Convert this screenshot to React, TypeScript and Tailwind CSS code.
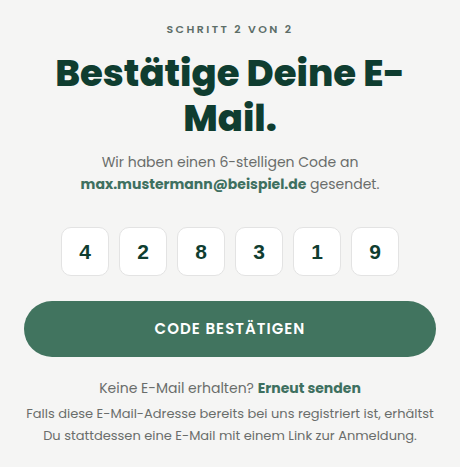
export default function App() {
  const digits = ["4", "2", "8", "3", "1", "9"];
  return (
    <div
      className="min-h-[467px] w-full bg-[#f5f5f4] px-6 pt-[21px] text-center"
      style={{ fontFamily: "Poppins, 'Open Sans', 'Noto Sans', sans-serif" }}
    >
      <p className="text-[11px] font-semibold leading-4 tracking-[0.22em] text-[#5d6e68]">
        SCHRITT 2 VON 2
      </p>
      <h1 className="mx-auto mt-[14px] max-w-[400px] text-[37px] font-extrabold leading-[45px] text-[#0f3d30]">
        Bestätige Deine E-Mail.
      </h1>
      <p className="mt-[10px] text-[14px] leading-[22px] text-[#6a6d6b]">
        Wir haben einen 6-stelligen Code an
        <br />
        <span className="font-bold text-[#3e7060]">max.mustermann@beispiel.de</span> gesendet.
      </p>
      <div className="mt-[32px] flex justify-center gap-[10px]">
        {digits.map((d, i) => (
          <div
            key={i}
            className="flex h-[49px] w-[48px] items-center justify-center rounded-[10px] border border-[#e3e3e3] bg-white text-[21px] font-bold text-[#0f3d30]"
            style={{ fontFamily: "'Liberation Sans', Arial, sans-serif" }}
          >
            {d}
          </div>
        ))}
      </div>
      <button className="mt-[25px] flex h-[56px] w-full items-center justify-center rounded-full bg-[#41745f] text-[15px] font-semibold tracking-[0.07em] text-white">
        CODE BESTÄTIGEN
      </button>
      <p className="mt-[20px] text-[14px] leading-[22px] text-[#6a6d6b]">
        Keine E-Mail erhalten? <span className="font-bold text-[#3e7060]">Erneut senden</span>
      </p>
      <p className="mt-[4px] text-[13px] leading-[22px] text-[#6a6d6b]">
        Falls diese E-Mail-Adresse bereits bei uns registriert ist, erhältst
        <br />
        Du stattdessen eine E-Mail mit einem Link zur Anmeldung.
      </p>
    </div>
  );
}
